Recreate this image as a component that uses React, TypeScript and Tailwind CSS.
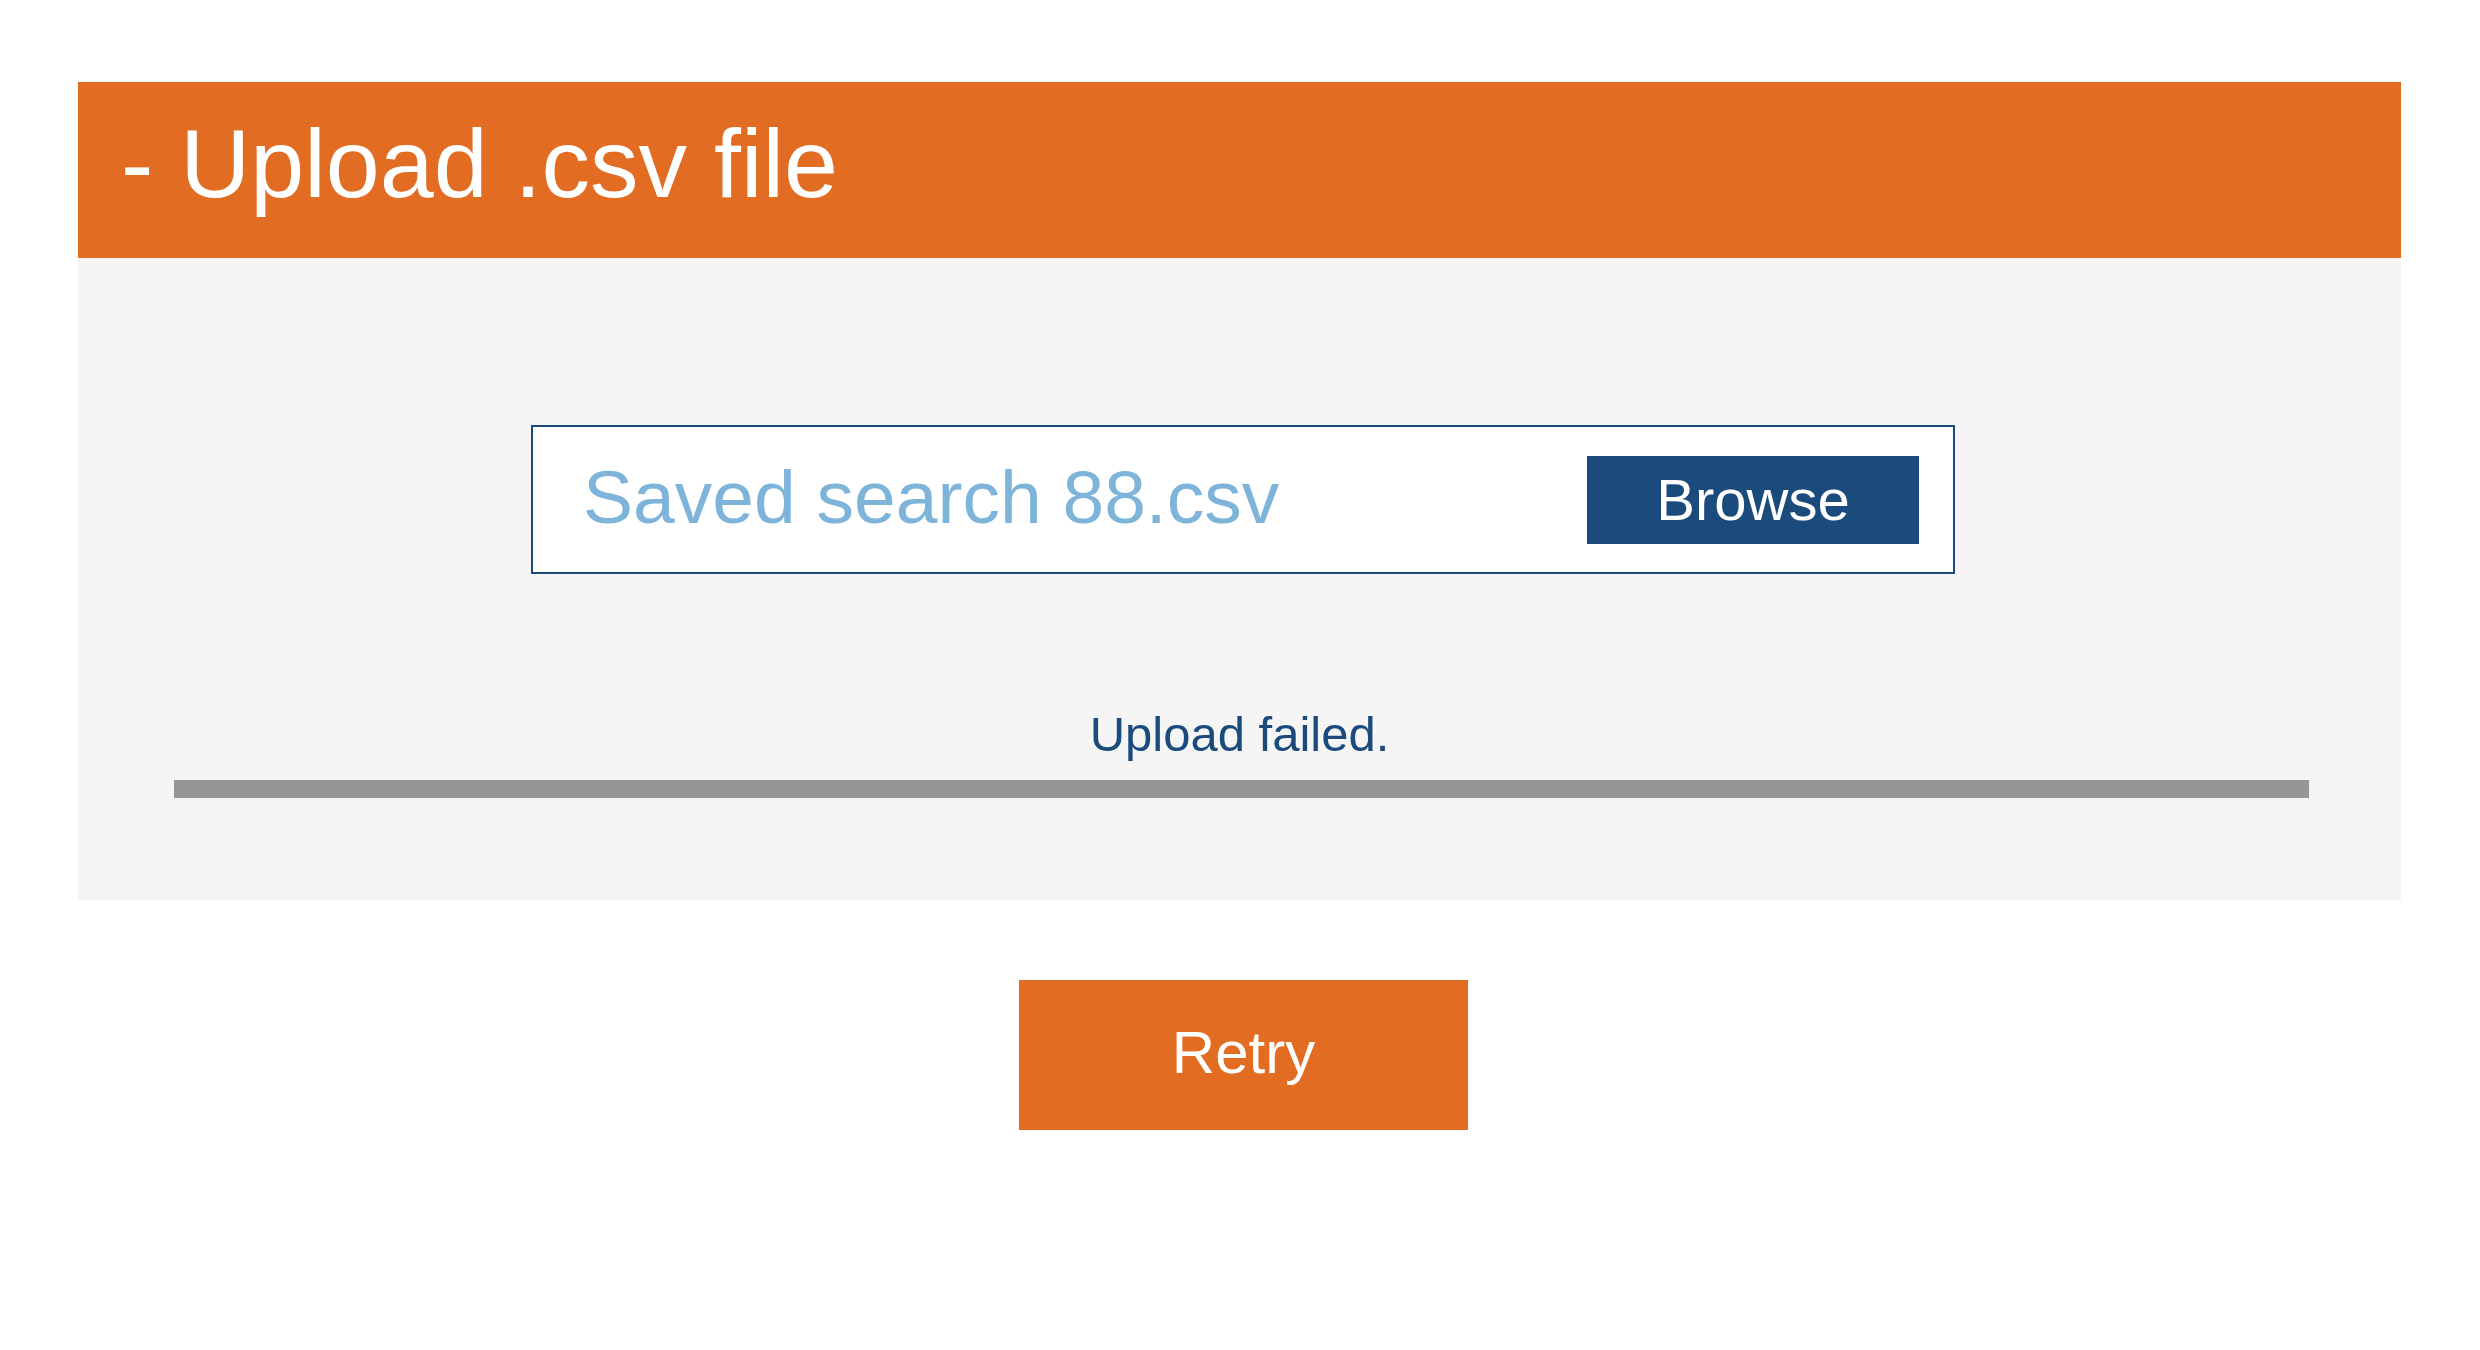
export default function App() {
  return (
    <div className="min-h-screen bg-white pt-[82px] font-['Liberation_Sans',Arial,sans-serif]">
      <div className="ml-[78px] w-[2323px]">
        {/* Header */}
        <div className="h-[176px] bg-[#e16c22] pl-[43px] pt-[33px]">
          <h1 className="text-[97px] leading-none text-white">- Upload .csv file</h1>
        </div>

        {/* Upload panel */}
        <div className="h-[642px] bg-[#f5f5f5] pt-[167px]">
          <div className="ml-[453px] flex h-[149px] w-[1424px] items-center justify-between border-2 border-[#1a4b7c] bg-white pl-[50px] pr-[34px]">
            <span className="-mt-[4px] text-[75px] leading-none text-[#7eb4d9]">Saved search 88.csv</span>
            <button className="flex h-[88px] w-[332px] items-center justify-center bg-[#1a4b7c] text-[58px] leading-none text-white">
              Browse
            </button>
          </div>

          <p className="mt-[136px] text-center text-[49px] leading-none text-[#1a4b7c]">Upload failed.</p>

          <div className="ml-[96px] mt-[21px] h-[18px] w-[2135px] bg-[#969696]" />
        </div>
      </div>

      {/* Retry */}
      <div className="ml-[1019px] mt-[80px]">
        <button className="flex h-[150px] w-[449px] items-center justify-center bg-[#e16c22] pb-[4px] text-[60px] leading-none text-white">
          Retry
        </button>
      </div>
    </div>
  );
}
